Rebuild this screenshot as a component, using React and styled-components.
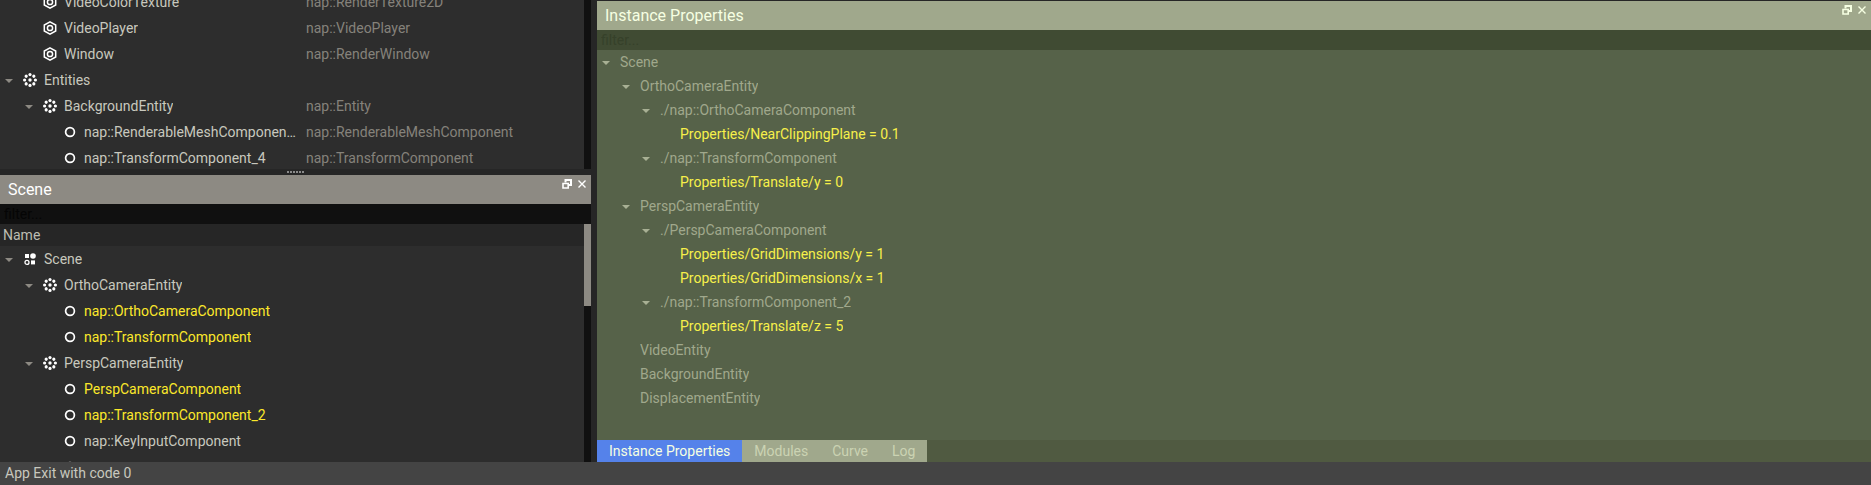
import React from "react";
import styled, { createGlobalStyle } from "styled-components";

const GlobalStyle = createGlobalStyle`
  * { box-sizing: border-box; }
  body {
    margin: 0;
    background: #262626;
    font-family: Roboto, "Liberation Sans", sans-serif;
    font-size: 14px;
    overflow: hidden;
  }
  button, input { font: inherit; }
`;

const olive = {
  title: "#a0a88c",
  titleText: "#f6ffe2",
  filter: "#404b33",
  filterText: "#36412a",
  body: "#566249",
  text: "#a0a88c",
  arrow: "#a8b094",
  changed: "#f6f04a",
};

const gray = {
  title: "#8d8a83",
  titleText: "#ffffff",
  filter: "#101010",
  filterText: "#050505",
  body: "#2d2d2d",
  text: "#c8c8be",
  arrow: "#8d8a83",
  changed: "#fce82a",
};

const Shell = styled.div`
  display: flex;
  flex-direction: column;
  height: 100vh;
`;

const Workspace = styled.main`
  flex: 1;
  min-height: 0;
  display: flex;
  gap: 6px;
`;

const Sidebar = styled.div`
  flex: 0 0 591px;
  display: grid;
  grid-template-rows: 169fr 6px 287fr;
`;

const ResourcePanel = styled.section`
  min-height: 0;
  overflow: hidden;
  display: flex;
  background: ${gray.body};
`;

const ScenePanel = styled.section`
  min-height: 0;
  overflow: hidden;
  display: flex;
  flex-direction: column;
  background: ${gray.body};
`;

const PropertiesPanel = styled.section`
  flex: 1;
  min-width: 0;
  margin-top: 1px;
  display: flex;
  flex-direction: column;
  background: ${olive.body};
`;

const Splitter = styled.div`
  display: flex;
  align-items: center;
  justify-content: center;
  gap: 1px;
`;

const Grip = styled.span`
  width: 2px;
  height: 2px;
  background: #8a8a8a;
`;

const TitleBar = styled.header`
  flex: none;
  height: 29px;
  padding: 0 5px 0 8px;
  display: flex;
  align-items: center;
  justify-content: space-between;
  background: ${(p) => p.$tone.title};
  color: ${(p) => p.$tone.titleText};
`;

const Title = styled.h2`
  margin: 0;
  font-size: 16px;
  font-weight: 400;
  line-height: 20px;
`;

const TitleActions = styled.div`
  align-self: flex-start;
  display: flex;
  gap: 6px;
  padding-top: 4px;
`;

const TitleButton = styled.button`
  display: block;
  padding: 0;
  border: 0;
  background: none;
  color: inherit;
  line-height: 0;
`;

const Filter = styled.input`
  flex: none;
  width: 100%;
  height: 20px;
  padding: 0 4px;
  border: 0;
  outline: 0;
  background: ${(p) => p.$tone.filter};
  color: ${(p) => p.$tone.text};
  &::placeholder { color: ${(p) => p.$tone.filterText}; opacity: 1; }
`;

const ScrollArea = styled.div`
  flex: 1;
  min-height: 0;
  display: flex;
`;

const ScrollContent = styled.div`
  flex: 1;
  min-width: 0;
  overflow: hidden;
  display: flex;
  flex-direction: column;
  justify-content: ${(p) => (p.$atEnd ? "flex-end" : "flex-start")};
`;

const ScrollTrack = styled.div`
  flex: none;
  width: 7px;
  background: #101010;
`;

const ScrollThumb = styled.div`
  height: 82px;
  background: #8d8a83;
`;

const ColumnHeader = styled.div`
  flex: none;
  height: 22px;
  padding-left: 3px;
  line-height: 22px;
  background: #262626;
  color: #bdbdb2;
`;

const Tree = styled.ul`
  flex: none;
  margin: 0 0 -2px;
  padding: 0;
  list-style: none;
`;

const Row = styled.li`
  display: flex;
  align-items: center;
  height: ${(p) => p.$height}px;
  color: ${(p) => (p.$changed ? p.$tone.changed : p.$tone.text)};
`;

const NameCell = styled.div`
  flex: ${(p) => (p.$fixed ? "0 0 298px" : "1")};
  min-width: 0;
  display: flex;
  align-items: center;
  padding-left: ${(p) => p.$depth * 20}px;
`;

const Label = styled.span`
  min-width: 0;
  overflow: hidden;
  white-space: nowrap;
  text-overflow: ellipsis;
  line-height: 20px;
`;

const TypeCell = styled.span`
  padding-left: 8px;
  line-height: 20px;
  color: #85827b;
`;

const Toggle = styled.button`
  flex: none;
  width: 20px;
  height: 20px;
  padding: 0 0 0 5px;
  border: 0;
  background: none;
  line-height: 0;
  text-align: left;
  color: ${(p) => p.$tone.arrow};
`;

const ToggleSpace = styled.span`
  flex: none;
  width: 20px;
`;

const IconCell = styled.span`
  flex: none;
  width: 20px;
  margin-right: 4px;
  display: flex;
  justify-content: center;
  color: #ffffff;
`;

const LabelGap = styled.span`
  flex: none;
  width: 3px;
`;

const TabBar = styled.nav`
  flex: none;
  margin-top: auto;
  height: 22px;
  display: flex;
  background: #505a41;
`;

const Tab = styled.button`
  padding: 0 12px;
  border: 0;
  background: ${(p) => (p.$active ? "#5582ea" : olive.title)};
  color: ${(p) => (p.$active ? "#f6ffe2" : "#cbd3b3")};
`;

const StatusBar = styled.footer`
  flex: none;
  height: 23px;
  padding-left: 5px;
  line-height: 23px;
  background: #444444;
  color: #c8c8be;
`;

const ring = [0, 45, 90, 135, 180, 225, 270, 315];

function Icon({ kind }) {
  return (
    <svg width="14" height="14" viewBox="0 0 14 14" aria-hidden="true">
      {kind === "resource" && (
        <g fill="none" stroke="currentColor" strokeWidth="1.5">
          <path d="M7 .9 12.7 4v6L7 13.1 1.3 10V4Z" />
          <circle cx="7" cy="7" r="2.6" />
        </g>
      )}
      {kind === "entity" && (
        <g fill="currentColor">
          <circle cx="7" cy="7" r="1.7" />
          {ring.map((a) => (
            <circle key={a} cx="7" cy="1.6" r="1.6" transform={`rotate(${a} 7 7)`} />
          ))}
        </g>
      )}
      {kind === "component" && (
        <circle cx="7" cy="7" r="4.4" fill="none" stroke="currentColor" strokeWidth="1.7" />
      )}
      {kind === "scene" && (
        <g fill="currentColor">
          <rect x="2" y="2" width="4" height="4" />
          <circle cx="10" cy="4" r="2.8" />
          <circle cx="4" cy="10.4" r="2" fill="none" stroke="currentColor" strokeWidth="1.3" />
          <rect x="8" y="8.4" width="4" height="4" />
        </g>
      )}
    </svg>
  );
}

function PanelHead({ title, tone }) {
  return (
    <>
      <TitleBar $tone={tone}>
        <Title>{title}</Title>
        <TitleActions>
          <TitleButton aria-label="Float panel">
            <svg width="10" height="10" viewBox="0 0 10 10" fill="none" stroke="currentColor">
              <path d="M3.5 3.5V1H9v5H7" strokeWidth="2" />
              <path d="M1 4.5h5.2V9H1Z" strokeWidth="1.6" />
            </svg>
          </TitleButton>
          <TitleButton aria-label="Close panel">
            <svg width="8" height="10" viewBox="0 0 8 10" fill="none" stroke="currentColor">
              <path d="m.5 1.5 7 7m0-7-7 7" strokeWidth="1.4" />
            </svg>
          </TitleButton>
        </TitleActions>
      </TitleBar>
      <Filter $tone={tone} aria-label={`Filter ${title}`} placeholder="filter..." />
    </>
  );
}

function TreeView({ rows, tone, rowHeight, columns }) {
  return (
    <Tree>
      {rows.map(([depth, label, o = {}], i) => (
        <Row key={i} $height={rowHeight} $tone={tone} $changed={o.changed}>
          <NameCell $depth={depth} $fixed={columns}>
            {o.open ? (
              <Toggle $tone={tone} aria-label={`Collapse ${label}`}>
                <svg width="8" height="4" viewBox="0 0 8 4">
                  <path d="M0 0h8L4 4Z" fill="currentColor" />
                </svg>
              </Toggle>
            ) : (
              <ToggleSpace />
            )}
            {o.icon ? (
              <IconCell>
                <Icon kind={o.icon} />
              </IconCell>
            ) : (
              <LabelGap />
            )}
            <Label>{label}</Label>
          </NameCell>
          {columns && <TypeCell>{o.type}</TypeCell>}
        </Row>
      ))}
    </Tree>
  );
}

const resources = [
  [1, "VideoColorTexture", { icon: "resource", type: "nap::RenderTexture2D" }],
  [1, "VideoPlayer", { icon: "resource", type: "nap::VideoPlayer" }],
  [1, "Window", { icon: "resource", type: "nap::RenderWindow" }],
  [0, "Entities", { icon: "entity", open: true }],
  [1, "BackgroundEntity", { icon: "entity", open: true, type: "nap::Entity" }],
  [2, "nap::RenderableMeshComponen…", { icon: "component", type: "nap::RenderableMeshComponent" }],
  [2, "nap::TransformComponent_4", { icon: "component", type: "nap::TransformComponent" }],
];

const scene = [
  [0, "Scene", { icon: "scene", open: true }],
  [1, "OrthoCameraEntity", { icon: "entity", open: true }],
  [2, "nap::OrthoCameraComponent", { icon: "component", changed: true }],
  [2, "nap::TransformComponent", { icon: "component", changed: true }],
  [1, "PerspCameraEntity", { icon: "entity", open: true }],
  [2, "PerspCameraComponent", { icon: "component", changed: true }],
  [2, "nap::TransformComponent_2", { icon: "component", changed: true }],
  [2, "nap::KeyInputComponent", { icon: "component" }],
  [2, "", { icon: "component" }],
];

const properties = [
  [0, "Scene", { open: true }],
  [1, "OrthoCameraEntity", { open: true }],
  [2, "./nap::OrthoCameraComponent", { open: true }],
  [3, "Properties/NearClippingPlane = 0.1", { changed: true }],
  [2, "./nap::TransformComponent", { open: true }],
  [3, "Properties/Translate/y = 0", { changed: true }],
  [1, "PerspCameraEntity", { open: true }],
  [2, "./PerspCameraComponent", { open: true }],
  [3, "Properties/GridDimensions/y = 1", { changed: true }],
  [3, "Properties/GridDimensions/x = 1", { changed: true }],
  [2, "./nap::TransformComponent_2", { open: true }],
  [3, "Properties/Translate/z = 5", { changed: true }],
  [1, "VideoEntity"],
  [1, "BackgroundEntity"],
  [1, "DisplacementEntity"],
];

export default function App() {
  return (
    <Shell>
      <GlobalStyle />
      <Workspace>
        <Sidebar>
          <ResourcePanel aria-label="Resources">
            <ScrollContent $atEnd>
              <TreeView rows={resources} tone={gray} rowHeight={26} columns />
            </ScrollContent>
            <ScrollTrack />
          </ResourcePanel>
          <Splitter>
            {[0, 1, 2, 3, 4, 5].map((n) => (
              <Grip key={n} />
            ))}
          </Splitter>
          <ScenePanel aria-label="Scene">
            <PanelHead title="Scene" tone={gray} />
            <ScrollArea>
              <ScrollContent>
                <ColumnHeader>Name</ColumnHeader>
                <TreeView rows={scene} tone={gray} rowHeight={26} />
              </ScrollContent>
              <ScrollTrack>
                <ScrollThumb />
              </ScrollTrack>
            </ScrollArea>
          </ScenePanel>
        </Sidebar>
        <PropertiesPanel aria-label="Instance Properties">
          <PanelHead title="Instance Properties" tone={olive} />
          <TreeView rows={properties} tone={olive} rowHeight={24} />
          <TabBar>
            <Tab $active>Instance Properties</Tab>
            <Tab>Modules</Tab>
            <Tab>Curve</Tab>
            <Tab>Log</Tab>
          </TabBar>
        </PropertiesPanel>
      </Workspace>
      <StatusBar>App Exit with code 0</StatusBar>
    </Shell>
  );
}
